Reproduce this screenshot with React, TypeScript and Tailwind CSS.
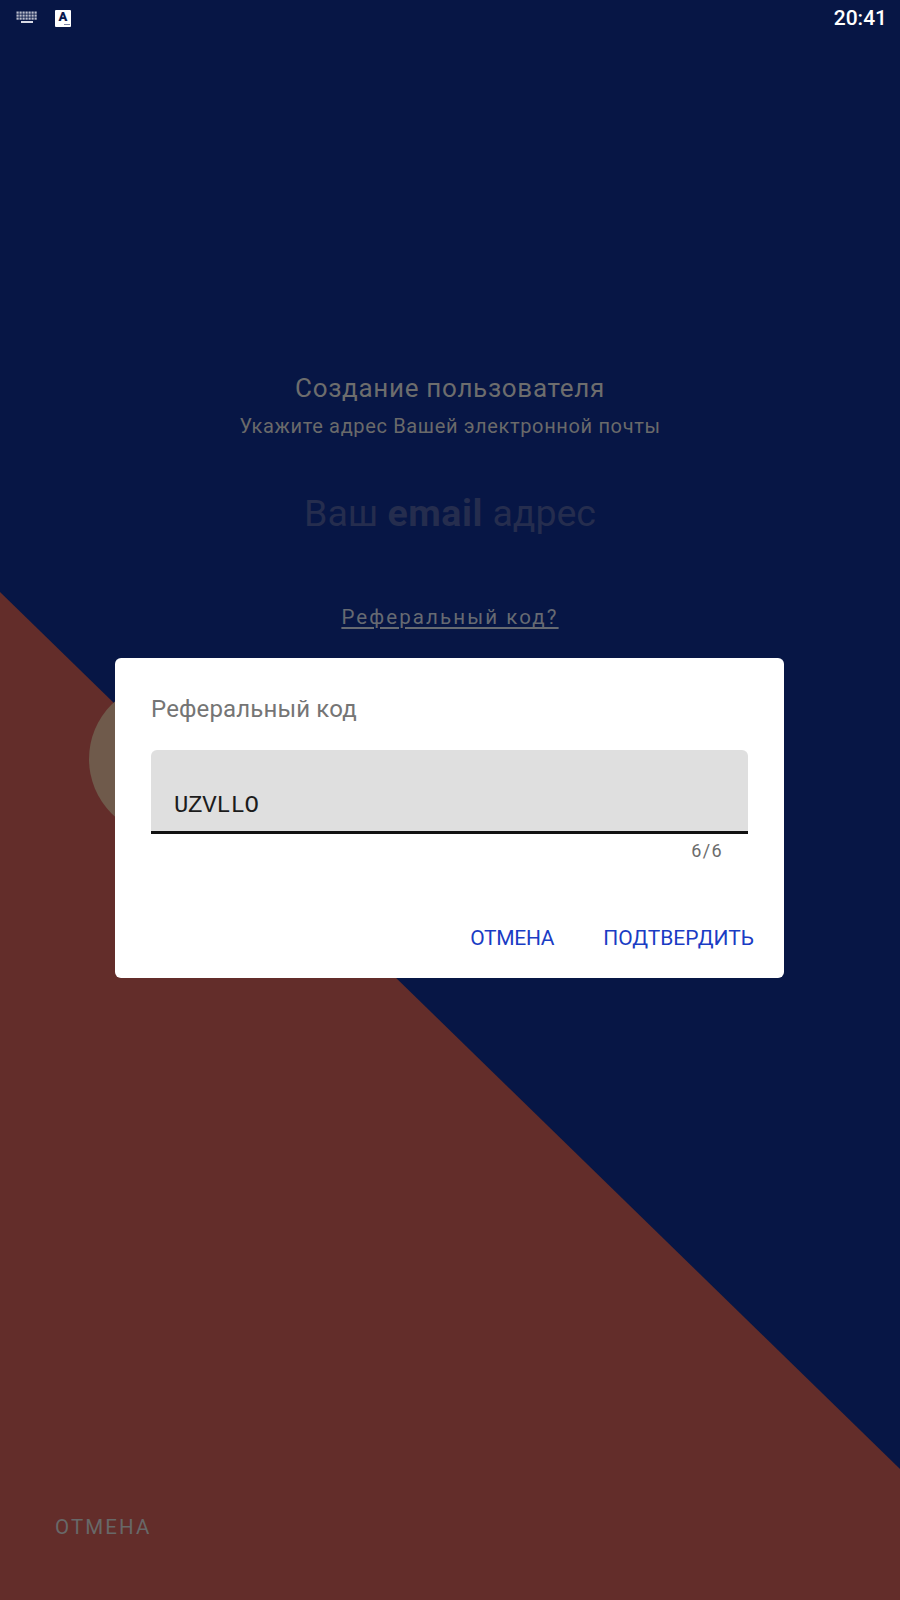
const keyRows = [2.5, 5.5, 8.5];
const keyCols = [1, 4, 7, 10, 13, 16, 19];

export default function App() {
  return (
    <div className="relative w-[900px] h-[1600px] overflow-hidden bg-[#071645] font-['Roboto',sans-serif]">
      {/* background shapes */}
      <svg className="absolute inset-0" width="900" height="1600" viewBox="0 0 900 1600">
        <polygon points="0,592 900,1469 900,1600 0,1600" fill="#632d2a" />
        <circle cx="166" cy="759" r="77" fill="#6f5a4b" />
      </svg>

      <div className="relative flex flex-col h-full">
        {/* status bar */}
        <div className="flex items-center h-[36px] pl-[16px] pr-[13px]">
          <svg width="22" height="14" viewBox="0 0 22 14" fill="#d8dae4">
            {keyRows.map((y) =>
              keyCols.map((x) => <rect key={`${x}-${y}`} x={x - 0.5} y={y - 2} width="2.2" height="2.2" opacity="0.85" />)
            )}
            <rect x="5" y="10" width="12" height="2" />
          </svg>
          <div className="ml-[17px] w-[16px] h-[17px] rounded-[1px] bg-white flex flex-col items-center">
            <span className="text-[13px] leading-[13px] font-black text-[#0b1a50]">A</span>
            <span className="self-end mr-[1px] w-[6px] h-[1px] mt-[1px] bg-[#7d85a5]" />
          </div>
          <span className="ml-auto text-[21px] leading-none font-medium text-white">20:41</span>
        </div>

        {/* form behind the dialog */}
        <div className="flex flex-col items-center pt-[332px]">
          <h1 className="text-[26px] leading-[40px] tracking-[0.7px] text-[#6d6d6d]">Создание пользователя</h1>
          <p className="text-[20px] leading-[34px] mt-[1px] tracking-[0.65px] text-[#6a6a6a]">
            Укажите адрес Вашей электронной почты
          </p>
          <p className="mt-[46px] text-[37.5px] leading-[48px] text-[#252d4e]">
            Ваш <b className="font-bold tracking-[0.6px]">email</b> адрес
          </p>
          <a className="mt-[66px] text-[20.5px] leading-[28px] tracking-[2.1px] underline underline-offset-[3px] text-[#666a72]">
            Реферальный код?
          </a>
        </div>

        <span className="mt-auto mb-[59px] ml-[55px] text-[20.5px] leading-[28px] tracking-[2.1px] text-[#686868]">
          ОТМЕНА
        </span>
      </div>

      {/* dialog */}
      <div className="absolute left-[115px] top-[658px] w-[669px] h-[320px] rounded-[6px] bg-white px-[36px] pt-[37px]">
        <h2 className="text-[24px] leading-[28px] tracking-[0.15px] text-[#757575]">Реферальный код</h2>
        <div className="mt-[27px] h-[84px] rounded-t-[6px] bg-[#dfdfdf] border-b-[3px] border-[#111111] pl-[23px] pt-[40px]">
          <span className="block text-[24px] leading-[32px] tracking-[-0.3px] text-[#1c1c1c] font-['Liberation_Mono',monospace]">
            UZVLLO
          </span>
        </div>
        <div className="mt-[5px] pr-[25px] text-right text-[18px] leading-[24px] tracking-[1.4px] text-[#6b6b6b]">6/6</div>
        <div className="mt-[61px] flex justify-end gap-[49px] mr-[-6px] text-[21px] leading-[28px] text-[#1a3cc4]">
          <button className="tracking-[-0.3px]">ОТМЕНА</button>
          <button>ПОДТВЕРДИТЬ</button>
        </div>
      </div>
    </div>
  );
}
